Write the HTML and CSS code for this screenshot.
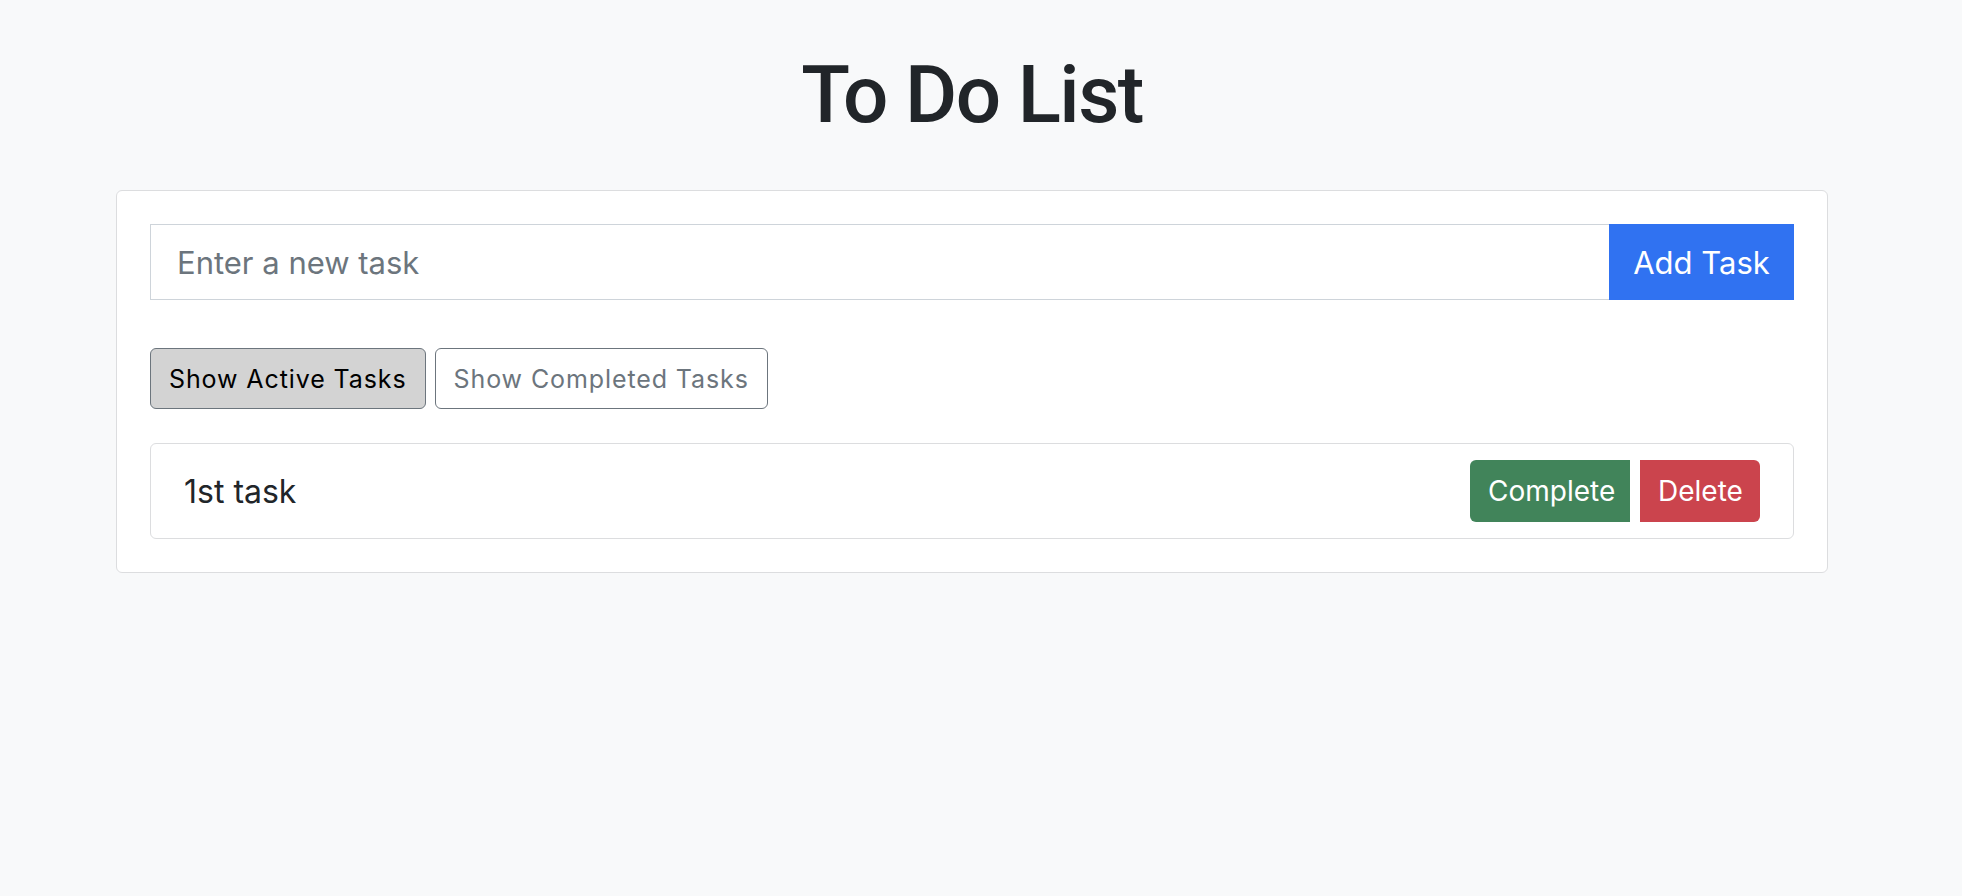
FILE: index.html
```html
<!DOCTYPE html>
<html lang="en">
<head>
<meta charset="utf-8">
<title>To Do List</title>
<link rel="stylesheet" href="styles.css">
</head>
<body>
<div class="container">
  <h1 class="title">To Do List</h1>
  <div class="card">
    <div class="input-group">
      <input class="task-input" type="text" placeholder="Enter a new task">
      <button class="btn btn-add">Add Task</button>
    </div>
    <div class="filters">
      <button class="btn filter filter-active">Show Active Tasks</button>
      <button class="btn filter">Show Completed Tasks</button>
    </div>
    <ul class="tasks">
      <li class="task">
        <span class="task-name">1st task</span>
        <div class="actions">
          <button class="btn btn-complete">Complete</button>
          <button class="btn btn-delete">Delete</button>
        </div>
      </li>
    </ul>
  </div>
</div>
</body>
</html>
```

FILE: styles.css
```css
* { box-sizing: border-box; }
html, body { margin: 0; padding: 0; }
body {
  background: #f8f9fa;
  color: #212529;
  font-family: Inter, "Liberation Sans", Arial, sans-serif;
}
.container {
  width: 1712px;
  margin-left: 116px;
}
.title {
  margin: 0;
  padding-top: 47px;
  padding-bottom: 47px;
  font-family: Roboto, Inter, "Liberation Sans", sans-serif;
  font-size: 80px;
  line-height: 96px;
  font-weight: 500;
  letter-spacing: -1.6px;
  text-align: center;
  color: #212529;
}
.card {
  background: #fff;
  border: 1px solid #dcdddf;
  border-radius: 6px;
  padding: 33px;
}
.input-group {
  display: flex;
  height: 76px;
}
.task-input {
  flex: 1;
  min-width: 0;
  height: 76px;
  border: 1px solid #ced4da;
  border-right: none;
  border-radius: 0;
  padding: 0 26px;
  font-family: inherit;
  font-size: 31px;
  color: #212529;
  outline: none;
  background: #fff;
}
.task-input::placeholder { color: #6c757d; }
.btn {
  font-family: inherit;
  cursor: pointer;
  margin: 0;
}
.btn-add {
  width: 185px;
  height: 76px;
  border: none;
  border-radius: 0;
  background: #3072f1;
  color: #fff;
  font-size: 31px;
  padding: 0;
}
.filters {
  display: flex;
  gap: 9px;
  margin-top: 48px;
}
.filter {
  height: 61px;
  padding: 0 18px;
  border: 1px solid #6c757d;
  border-radius: 6px;
  background: #fff;
  color: #6c757d;
  font-size: 25px;
  letter-spacing: 0.9px;
}
.filter-active {
  background: #d3d3d3;
  color: #000;
}
.tasks {
  list-style: none;
  margin: 34px 0 0;
  padding: 0;
}
.task {
  display: flex;
  align-items: center;
  justify-content: space-between;
  height: 96px;
  padding: 0 33px;
  border: 1px solid #dcdddf;
  border-radius: 6px;
}
.task-name {
  font-size: 32px;
  color: #212529;
}
.actions {
  display: flex;
  gap: 10px;
}
.btn-complete, .btn-delete {
  height: 62px;
  border: none;
  color: #fff;
  font-size: 28px;
  padding: 0 18px;
}
.btn-complete {
  width: 160px;
  background: #41845a;
  border-radius: 6px 0 0 6px;
}
.btn-delete {
  width: 120px;
  background: #cb444d;
  border-radius: 0 6px 6px 0;
}
```
